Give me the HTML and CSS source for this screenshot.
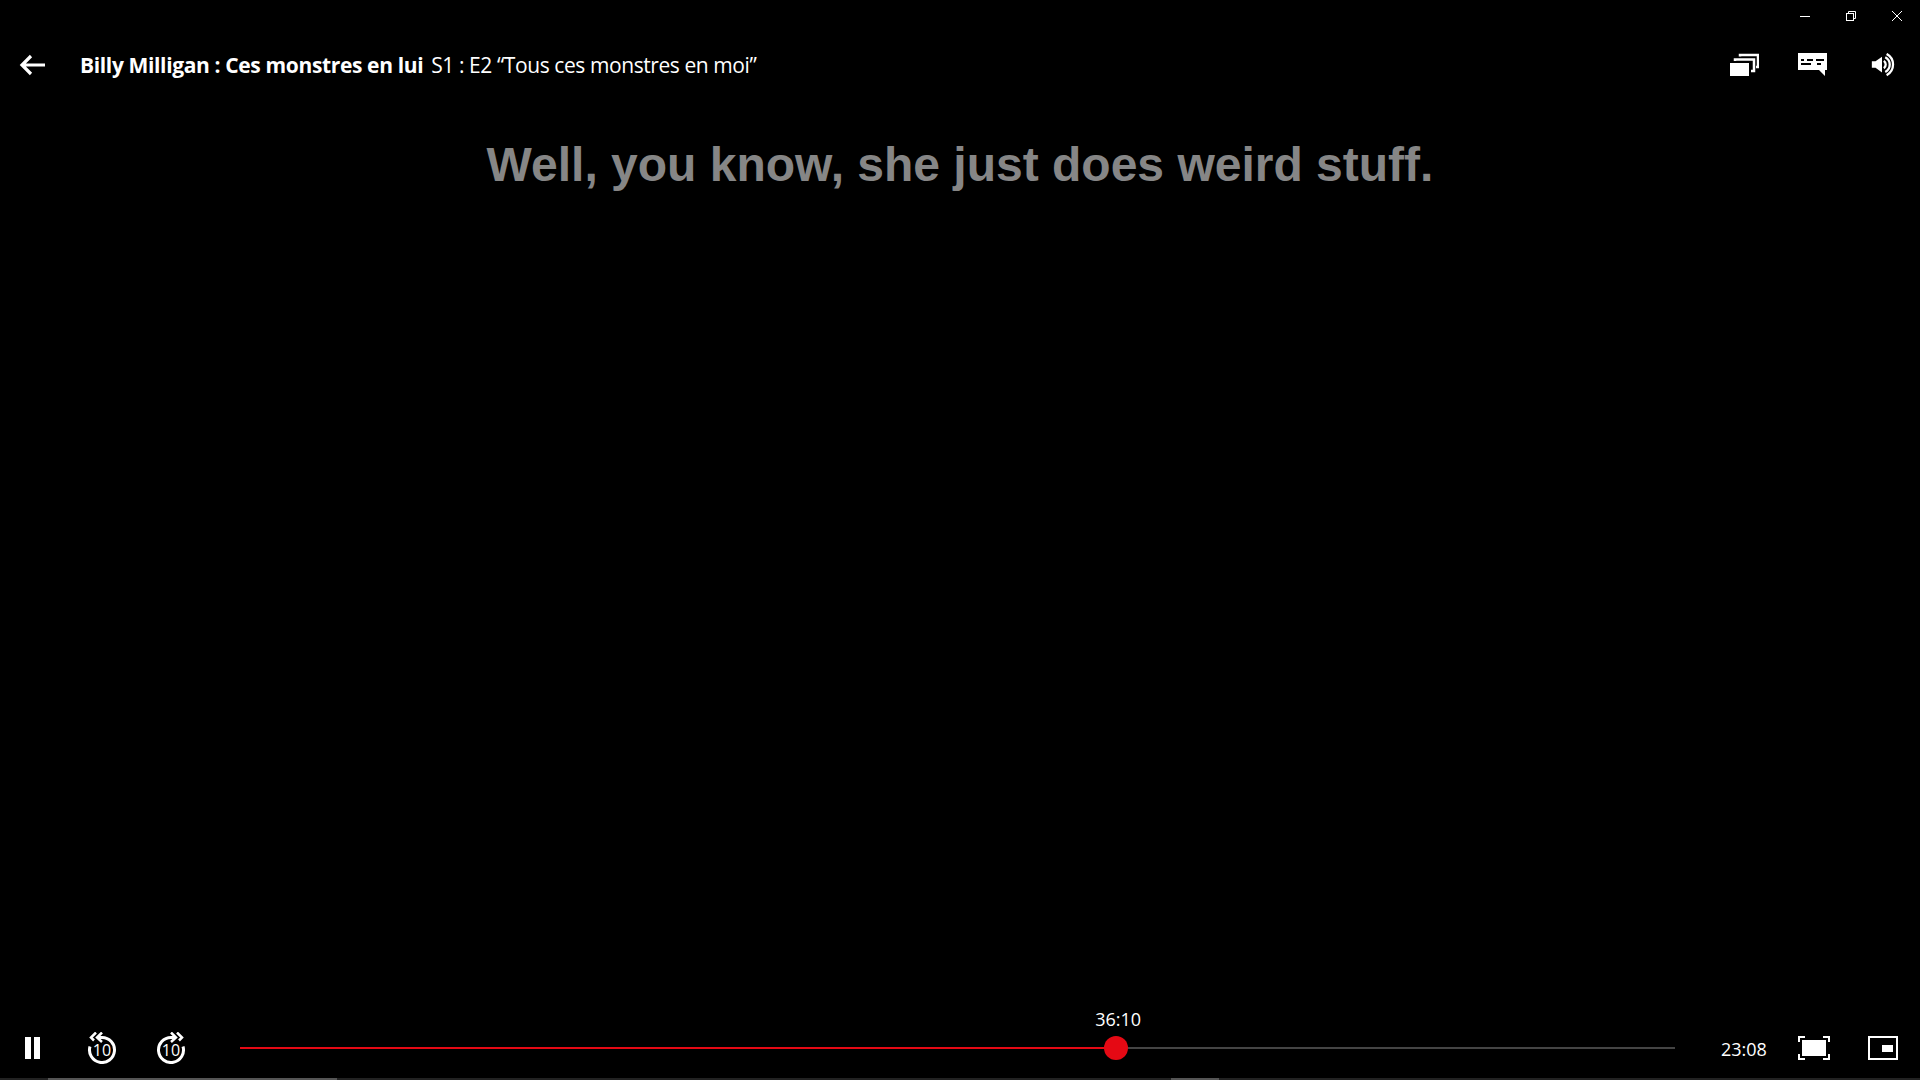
FILE: index.html
```html
<!DOCTYPE html>
<html lang="fr">
<head>
<meta charset="utf-8">
<title>Billy Milligan : Ces monstres en lui</title>
<link rel="stylesheet" href="styles.css">
</head>
<body>
<div class="player">
  <div class="caption-bar">
    <span class="caption-btn"><svg class="caption-icon" viewBox="0 0 10 10"><path d="M0 5.5H10" /></svg></span>
    <span class="caption-btn"><svg class="caption-icon" viewBox="0 0 10 10"><rect x=".5" y="2.5" width="7" height="7"/><path d="M2.5 2.5V.5H9.5V7.5H7.5"/></svg></span>
    <span class="caption-btn"><svg class="caption-icon" viewBox="0 0 10 10"><path d="M0 0L10 10M10 0L0 10"/></svg></span>
  </div>

  <header class="top-bar">
    <svg class="back" viewBox="0 0 26 22"><path d="M12 2L3 11L12 20M3 11H26"/></svg>
    <div class="title"><b class="show">Billy Milligan : Ces monstres en lui</b><span class="episode">S1 : E2 “Tous ces monstres en moi”</span></div>
    <div class="top-actions">
      <span class="slot"><svg class="ico" viewBox="0 0 30 24"><path class="solid" d="M1 10H20V23H1Z"/><path class="line" d="M6 8V6.5H25V18H22"/><path class="line" d="M11 3.5V2H29V14H27"/></svg></span>
      <span class="slot"><svg class="ico" viewBox="0 0 30 24"><path class="solid" d="M0 0H29V17H27V23L21 17H0Z"/><path class="cut" d="M3 7H6M9 7H15M18 7H26M3 11H13M19 11H23"/></svg></span>
      <span class="slot"><svg class="ico" viewBox="0 0 24 26"><path class="solid" d="M1 9H5L12 4V21L5 16H1Z"/><path class="line" d="M14 8.500A5 5 0 0 1 14 16.500"/><path class="line" d="M15.500 4.500A9 9 0 0 1 15.500 20.500"/><path class="line" d="M17 1A13 13 0 0 1 17 24"/></svg></span>
    </div>
  </header>

  <div class="subtitle-zone"><p class="subtitle">Well, you know, she just does weird stuff.</p></div>

  <footer class="controls">
    <div class="controls-row">
      <svg class="pause" viewBox="0 0 15 22"><path class="solid" d="M0 0H6V22H0ZM9 0H15V22H9Z"/></svg>
      <svg class="skip skip-back" viewBox="0 0 32 32"><path class="ring" d="M4 14.500A12.500 12.500 0 1 0 16 5.500H12"/><path class="ring thin" d="M16 .5L11 5.500L16 10M10 .5L5 5.500L8 8.500"/><text class="skip-num" x="16" y="23.800">10</text></svg>
      <svg class="skip skip-fwd" viewBox="0 0 32 32"><path class="ring" d="M28 14.500A12.500 12.500 0 1 1 16 5.500H20"/><path class="ring thin" d="M16 .5L21 5.500L16 10M22 .5L27 5.500L24 8.500"/><text class="skip-num" x="16" y="23.800">10</text></svg>
      <div class="track">
        <div class="fill" style="width:61.05%">
          <span class="time-tip">36:10</span>
          <span class="thumb"></span>
        </div>
      </div>
      <span class="remaining">23:08</span>
      <svg class="fs" viewBox="0 0 32 24"><path class="line thin-line" d="M1 6V1H7M25 1H31V6M31 18V23H25M7 23H1V18"/><rect class="solid" x="4" y="4" width="24" height="16"/></svg>
      <svg class="pip" viewBox="0 0 30 24"><rect class="line thin-line" x="1" y="1" width="28" height="22"/><rect class="solid" x="14" y="9" width="11" height="7"/></svg>
    </div>
    <div class="taskbar-strip">
      <span class="strip-seg seg-a"></span>
      <span class="strip-seg seg-b"></span>
    </div>
  </footer>
</div>
</body>
</html>
```

FILE: styles.css
```css
* { box-sizing: border-box; }
html, body { margin: 0; height: 100%; background: #000; }
.player {
  width: 1920px;
  height: 1080px;
  display: flex;
  flex-direction: column;
  overflow: hidden;
  background: #000;
  color: #fff;
  font-family: "Open Sans", "Noto Sans", sans-serif;
}
svg { display: block; flex: none; fill: none; stroke: #fff; }
.solid { fill: #fff; stroke: none; }
.line { fill: none; stroke: #fff; stroke-width: 2.5; }
.cut { fill: none; stroke: #000; stroke-width: 2; }

.caption-bar { display: flex; justify-content: flex-end; height: 32px; }
.caption-btn { width: 46px; height: 32px; display: flex; align-items: center; justify-content: center; }
.caption-icon { width: 10px; height: 10px; stroke-width: 1; }

.top-bar { display: flex; align-items: center; height: 66px; padding-left: 19px; padding-right: 3px; }
.back { width: 26px; height: 22px; stroke-width: 3.2; }
.title { display: flex; align-items: baseline; margin-left: 35px; font-size: 21px; line-height: 28px; white-space: nowrap; }
.show { font-weight: 700; letter-spacing: -.36px; }
.episode { margin-left: 8px; font-weight: 400; letter-spacing: -.42px; }
.top-actions { display: flex; margin-left: auto; }
.slot { width: 69.3px; display: flex; justify-content: center; }
.ico { width: 30px; height: 24px; }

.subtitle-zone { display: flex; justify-content: center; padding-top: 39px; }
.subtitle {
  margin: 0;
  font-family: "Liberation Sans", Arial, sans-serif;
  font-weight: 700;
  font-size: 48px;
  line-height: 56px;
  color: #868686;
}

.controls { margin-top: auto; }
.controls-row { display: flex; align-items: center; height: 60px; padding-left: 25px; }
.pause { width: 15px; height: 22px; }
.skip { width: 32px; height: 32px; }
.skip-back { margin-left: 46px; }
.skip-fwd { margin-left: 37px; }
.ring { stroke: #fff; stroke-width: 3; fill: none; }
.ring.thin { stroke-width: 2.500; }
.skip-num { fill: #fff; stroke: none; font-family: "Open Sans", sans-serif; font-size: 16px; text-anchor: middle; }

.track { position: relative; width: 1435px; height: 2px; margin-left: 53px; background: #444; }
.fill { position: relative; height: 2px; background: #e50914; }
.thumb {
  position: absolute;
  right: -12px;
  top: -11px;
  width: 24px;
  height: 24px;
  border-radius: 50%;
  background: #e50914;
}
.time-tip {
  position: absolute;
  right: -25px;
  top: -40px;
  font-size: 18px;
  line-height: 24px;
}
.remaining { position: relative; top: 1px; margin-left: 46px; font-size: 18px; line-height: 24px; width: 46px; }
.fs { width: 32px; height: 24px; margin-left: 31px; }
.pip { width: 30px; height: 24px; margin-left: 38px; }
.thin-line { stroke-width: 2; }

.taskbar-strip { position: relative; height: 2px; background: #222; }
.strip-seg { position: absolute; top: 0; height: 2px; background: #555; }
.seg-a { left: 48px; width: 289px; }
.seg-b { left: 1171px; width: 48px; }
```
